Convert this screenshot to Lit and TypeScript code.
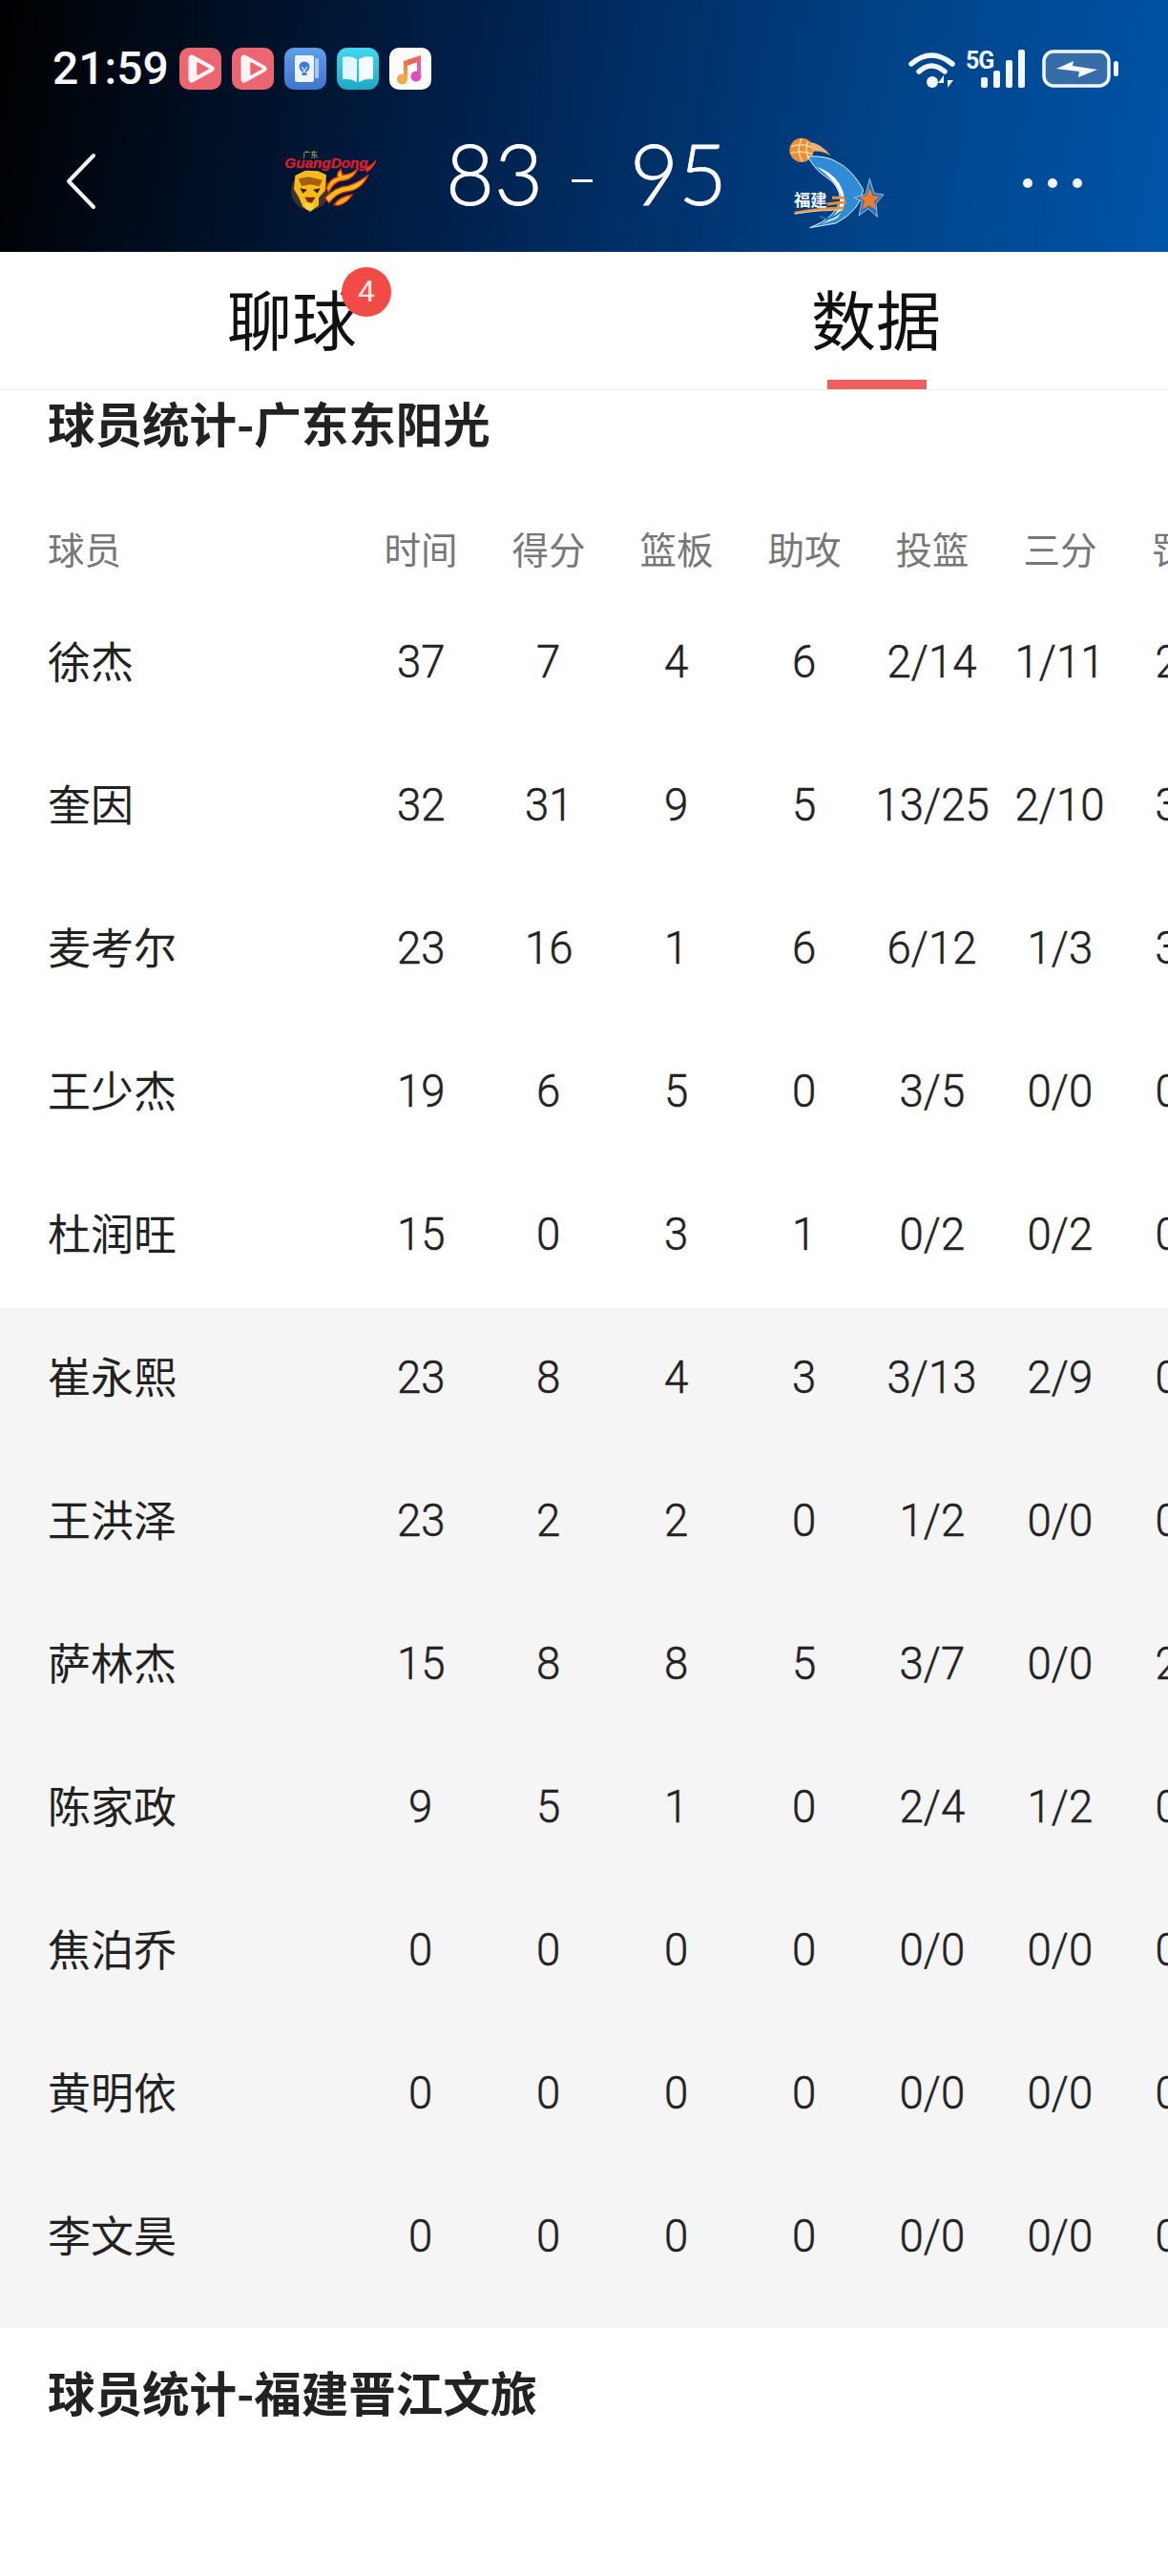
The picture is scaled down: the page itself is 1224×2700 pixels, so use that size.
import { LitElement, html, css, svg } from "lit";
import { customElement } from "lit/decorators.js";

const COLS = ["时间", "得分", "篮板", "助攻", "投篮", "三分", "罚球"];
const STARTERS: string[][] = [
  ["徐杰", "37", "7", "4", "6", "2/14", "1/11", "2/2"],
  ["奎因", "32", "31", "9", "5", "13/25", "2/10", "3/4"],
  ["麦考尔", "23", "16", "1", "6", "6/12", "1/3", "3/4"],
  ["王少杰", "19", "6", "5", "0", "3/5", "0/0", "0/0"],
  ["杜润旺", "15", "0", "3", "1", "0/2", "0/2", "0/0"],
];
const BENCH: string[][] = [
  ["崔永熙", "23", "8", "4", "3", "3/13", "2/9", "0/2"],
  ["王洪泽", "23", "2", "2", "0", "1/2", "0/0", "0/0"],
  ["萨林杰", "15", "8", "8", "5", "3/7", "0/0", "2/2"],
  ["陈家政", "9", "5", "1", "0", "2/4", "1/2", "0/0"],
  ["焦泊乔", "0", "0", "0", "0", "0/0", "0/0", "0/0"],
  ["黄明依", "0", "0", "0", "0", "0/0", "0/0", "0/0"],
  ["李文昊", "0", "0", "0", "0", "0/0", "0/0", "0/0"],
];

const playIcon = (inner: number) => html`<svg class="app" viewBox="0 0 44 44">
  <rect width="44" height="44" rx="10" fill="#ec6671"/>
  <path d="M13 11 L33 22 L13 33 Z" fill="#fbf3f4" stroke="#fbf3f4" stroke-width="7" stroke-linejoin="round"/>
  <path d="M${inner} 16 L${inner + 11} 22 L${inner} 28 Z" fill="#ec6671" stroke="#ec6671" stroke-width="1.5" stroke-linejoin="round"/>
</svg>`;

const bulbIcon = html`<svg class="app" viewBox="0 0 44 44">
  <defs><linearGradient id="bb" x1="0" y1="0" x2="0" y2="1"><stop offset="0" stop-color="#5f9fe9"/><stop offset="1" stop-color="#3d74d0"/></linearGradient></defs>
  <rect width="44" height="44" rx="10" fill="url(#bb)"/>
  <rect x="32" y="11" width="4" height="21" rx="1.5" fill="#a9c8f0"/>
  <rect x="11" y="8" width="20" height="28" rx="2.5" fill="#eef4fc"/>
  <circle cx="21" cy="20" r="5.5" fill="#3f7ad4"/>
  <path d="M18 20 L21 24 L24 20 M21 24 V27" fill="none" stroke="#eef4fc" stroke-width="1.2"/>
  <rect x="18.5" y="26" width="5" height="3" fill="#3f7ad4"/>
</svg>`;

const bookIcon = html`<svg class="app" viewBox="0 0 44 44">
  <defs><linearGradient id="cb" x1="0" y1="0" x2="0" y2="1"><stop offset="0" stop-color="#43d9ef"/><stop offset="1" stop-color="#1ea8c6"/></linearGradient></defs>
  <rect width="44" height="44" rx="11" fill="url(#cb)"/>
  <path d="M6 10 Q15 8 21 12 V36 Q14 32 6 33 Z" fill="#e4f5fb"/>
  <path d="M38 10 Q29 8 23 12 V36 Q30 32 38 33 Z" fill="#f3fbfe"/>
</svg>`;

const musicIcon = html`<svg class="app" viewBox="0 0 44 44">
  <defs><linearGradient id="mb" x1="0" y1="0" x2="1" y2="1"><stop offset="0" stop-color="#f2693f"/><stop offset="1" stop-color="#ee5c7c"/></linearGradient>
  <linearGradient id="mc" x1="0" y1="0" x2="0" y2="1"><stop offset="0" stop-color="#f0703c"/><stop offset="1" stop-color="#f4a045"/></linearGradient></defs>
  <rect width="44" height="44" rx="10" fill="#fdfcfb"/>
  <path d="M15 14 L33 8 V14 L15 20 Z" fill="url(#mb)"/>
  <path d="M15 14 H19 V31 H15 Z" fill="url(#mc)"/>
  <path d="M29 11 H33 V29 H29 Z" fill="#e8609a"/>
  <circle cx="13.5" cy="33" r="5.5" fill="#f4a94a"/>
  <circle cx="28" cy="30" r="5.5" fill="#da4fc0"/>
</svg>`;

const tigerLogo = html`<svg class="logo" viewBox="0 0 510 360">
  <circle cx="165" cy="240" r="60" fill="#3d3230"/>
  <text x="85" y="168" class="gd" textLength="262" lengthAdjust="spacingAndGlyphs">GuangDong</text>
  <text x="142" y="134" class="gz">广东</text>
  <path d="M340 168 Q360 158 374 140 Q368 168 342 182 Z" fill="#e8351e"/>
  <path d="M118 192 L150 176 L190 178 L216 190 L212 240 L192 262 L192 286 L165 306 L142 290 L130 262 L114 235 Z" fill="#f6bb1c"/>
  <path d="M128 202 L160 196 L204 206 L194 226 L165 220 L138 226 Z" fill="#a85c10"/>
  <path d="M133 232 L156 236 L142 248 Z M197 232 L174 236 L188 248 Z" fill="#3a1a08"/>
  <path d="M148 260 L182 260 L170 278 L158 276 Z" fill="#7a2a0c"/>
  <path d="M146 278 L178 280 L172 300 L154 300 Z" fill="#ffd642"/>
  <path d="M216 232 Q226 202 252 196 Q246 186 262 172 L266 190 Q296 190 316 168 Q300 208 262 208 Q238 214 224 244 Z" fill="#f7ad18" stroke="#d6301a" stroke-width="4"/>
  <path d="M212 262 Q246 226 286 224 Q322 212 348 190 Q326 238 282 242 Q250 246 224 278 Z" fill="#f9bf1e" stroke="#d6301a" stroke-width="4"/>
  <path d="M240 284 Q256 258 298 252 Q280 280 254 286 Z" fill="#f7ad18" stroke="#d6301a" stroke-width="4"/>
</svg>`;

const dolphinLogo = html`<svg class="logo" viewBox="0 0 510 360">
  <circle cx="150" cy="112" r="38" fill="#ea9136"/>
  <path d="M118 100 Q150 88 182 104 M116 122 Q150 112 184 124 M150 76 Q132 110 152 148 M170 84 Q160 110 172 140" fill="none" stroke="#fbe0b8" stroke-width="4"/>
  <path d="M176 86 Q214 92 242 130 Q216 112 184 116 Z" fill="#e8b27c"/>
  <path d="M170 132 Q228 128 262 150 Q306 170 344 236 Q336 300 258 342 L176 356 Q256 326 272 270 Q270 222 226 196 Q190 172 170 132 Z" fill="#2f8bd6" stroke="#e4f1fb" stroke-width="3"/>
  <path d="M196 164 Q240 176 268 216 Q304 276 262 326 L212 346 Q280 312 272 252 Q258 206 196 164 Z" fill="#f6fbff"/>
  <path d="M208 320 Q240 340 274 304" fill="none" stroke="#1d6db8" stroke-width="6"/>
  <path d="M246 262 H286 M128 310 Q200 296 284 294 M230 282 Q260 278 290 276" fill="none" stroke="#ee8f34" stroke-width="9"/>
  <path d="M128 312 Q200 300 270 300" fill="none" stroke="#e7d9c6" stroke-width="3"/>
  <path d="M364 202 L378 248 L408 252 L384 280 L388 322 L360 296 L330 318 L340 272 L316 262 L352 250 Z" fill="#2f70b8" stroke="#9cc4ea" stroke-width="3"/>
  <path d="M364 232 L374 256 L396 258 L378 274 L384 300 L362 286 L340 298 L348 272 L332 258 L354 256 Z" fill="#ee7c2c"/>
  <text x="126" y="288" class="fj">福建</text>
</svg>`;

const wifi = html`<svg class="s-wifi" viewBox="0 0 50 40">
  <path d="M3 15 Q24 -3 46 15" fill="none" stroke="#f1f6fb" stroke-width="5.5" stroke-linecap="round"/>
  <path d="M11 23 Q24 11 38 23" fill="none" stroke="#f1f6fb" stroke-width="5.5" stroke-linecap="round"/>
  <circle cx="25" cy="34" r="6" fill="#f1f6fb"/>
  <path d="M37 40 V27 L31 35 H37 Z M41 27 V40 L47 32 H41 Z" fill="#f1f6fb"/>
</svg>`;

const signal = html`<svg class="s-sig" viewBox="0 0 47 40">
  <rect x="0" y="29" width="7" height="11" rx="2" fill="#f1f6fb"/>
  <rect x="13" y="22" width="7" height="18" rx="2" fill="#f1f6fb"/>
  <rect x="26" y="11" width="7" height="29" rx="2" fill="#f1f6fb"/>
  <rect x="39" y="0" width="7" height="40" rx="2" fill="#f1f6fb"/>
</svg>`;

const battery = html`<svg class="s-bat" viewBox="0 0 80 40">
  <rect x="2" y="2" width="68" height="36" rx="10" fill="#366ca8" stroke="#f1f6fb" stroke-width="3.5"/>
  <rect x="75" y="12" width="5" height="16" rx="2.5" fill="#f1f6fb"/>
  <path d="M15 20 L33 12 L32 17 L58 21 L38 29 L39 23 Z" fill="#f6f9fc"/>
</svg>`;

const back = svg`<path d="M30 3 L4 30 L30 57" fill="none" stroke="#f4f6f8" stroke-width="4" stroke-linecap="round" stroke-linejoin="round"/>`;

@customElement("app-root")
export class AppRoot extends LitElement {
  static styles = css`
    :host {
      display: block;
      width: 1224px;
      height: 2700px;
      overflow: hidden;
      background: #fff;
      font-family: "Noto Sans CJK SC", "Noto Sans", sans-serif;
      color: #222;
    }
    .top {
      height: 264px;
      background: linear-gradient(100deg, #000 0%, #001a3e 33%, #002c62 52%, #00448a 76%, #0054a8 100%);
      color: #fff;
      display: flex;
      flex-direction: column;
    }
    .status {
      height: 50px;
      padding: 50px 52px 0 55px;
      display: flex;
      align-items: flex-start;
    }
    .time {
      width: 133px;
      font: 500 48px/44px Roboto, sans-serif;
      color: #f6f8fa;
    }
    .apps { display: flex; gap: 11px; }
    .app { width: 44px; height: 44px; display: block; }
    .sys {
      margin-left: auto;
      display: flex;
      align-items: flex-start;
      position: relative;
      padding-top: 2px;
    }
    .s-wifi { width: 50px; height: 40px; }
    .s-sig { width: 47px; height: 40px; margin-left: 26px; }
    .s-bat { width: 80px; height: 40px; margin-left: 17px; }
    .fiveg {
      position: absolute;
      left: 60px;
      top: 2px;
      font: 700 25px/24px Roboto, sans-serif;
      color: #f1f6fb;
      letter-spacing: -1px;
    }
    .nav {
      flex: 1;
      display: flex;
      align-items: flex-start;
      padding-left: 68px;
    }
    .back { width: 34px; height: 60px; margin-top: 60px; display: block; }
    .logo { width: 170px; height: 120px; display: block; margin-top: 20px; }
    .gd { font: italic 900 46px "Liberation Sans", sans-serif; fill: #cf1f30; stroke: #cf1f30; stroke-width: 1.5px; }
    .gz { font: 24px "Noto Sans CJK SC", sans-serif; fill: #b8d84a; }
    .fj { font: 700 52px "Noto Sans CJK SC", sans-serif; fill: #f4f8fc; }
    .logo-l { margin-left: 168px; }
    .score {
      width: 350px;
      margin-top: 31px;
      font: 300 88px/100px Lato, sans-serif;
      -webkit-text-stroke: 0.8px #fff;
      color: #fff;
      display: flex;
      align-items: center;
      height: 100px;
    }
    .score .a { margin-left: 27px; width: 132px; }
    .score .d { width: 22px; height: 3px; background: #fff; margin-top: 16px; }
    .score .b { margin-left: 39px; }
    .dots { display: flex; gap: 16px; margin: 87px 0 0 112px; }
    .dots i { width: 10px; height: 10px; border-radius: 50%; background: #f2f6fb; display: block; }

    .tabs {
      height: 144px;
      display: grid;
      grid-template-columns: 1fr 1fr;
      border-bottom: 1px solid #ededed;
      box-sizing: content-box;
    }
    .tab {
      position: relative;
      display: flex;
      justify-content: center;
      align-items: flex-start;
      padding-top: 30px;
      font-size: 68px;
      line-height: 78px;
      color: #111;
    }
    .tab .inner { position: relative; }
    .badge {
      position: absolute;
      left: 120px;
      top: -14px;
      width: 52px;
      height: 52px;
      border-radius: 50%;
      background: #f24a45;
      color: #fbe9e8;
      font: 400 32px/50px Roboto, sans-serif;
      text-align: center;
    }
    .bar {
      position: absolute;
      left: 255px;
      bottom: 0;
      width: 104px;
      height: 10px;
      background: #ef5f5f;
    }
    .title {
      font-size: 49.5px;
      line-height: 76px;
      font-weight: 700;
      color: #222;
      padding-left: 50px;
      margin: -4px 0 4px;
    }
    .title.second { padding-top: 29px; margin: 0; }
    .row {
      display: flex;
      width: 1224px;
      overflow: hidden;
      height: 150px;
      padding-bottom: 6px;
      box-sizing: border-box;
      align-items: center;
    }
    .row.head {
      height: 136px;
      padding: 42px 0 0;
      color: #777;
      font-size: 38.5px;
    }
    .name { width: 324px; margin: 0 0 3px 50px; font-size: 45px; flex: none; color: #222; }
    .head .name { font-size: 38.5px; color: #777; margin-bottom: 0; }
    .c { width: 134px; flex: none; text-align: center; }
    .n {
      display: inline-block;
      font: 300 49px/60px Roboto, sans-serif;
      -webkit-text-stroke: 0.5px #222;
      color: #222;
      transform: translateY(1px) scaleX(0.93);
      white-space: nowrap;
    }
    .bench { background: #f5f5f5; padding-bottom: 19px; }
  `;

  private row(r: string[]) {
    return html`<div class="row">
      <div class="name">${r[0]}</div>
      ${r.slice(1).map((v) => html`<div class="c"><span class="n">${v}</span></div>`)}
    </div>`;
  }

  render() {
    return html`
      <div class="top">
        <div class="status">
          <div class="time">21:59</div>
          <div class="apps">${playIcon(19)}${playIcon(20)}${bulbIcon}${bookIcon}${musicIcon}</div>
          <div class="sys">${wifi}<span class="fiveg">5G</span>${signal}${battery}</div>
        </div>
        <div class="nav">
          <svg class="back" viewBox="0 0 34 60">${back}</svg>
          <div class="logo-l">${tigerLogo}</div>
          <div class="score"><span class="a">83</span><span class="d"></span><span class="b">95</span></div>
          <div>${dolphinLogo}</div>
          <div class="dots"><i></i><i></i><i></i></div>
        </div>
      </div>
      <div class="tabs">
        <div class="tab"><div class="inner">聊球<span class="badge">4</span></div></div>
        <div class="tab"><div class="inner">数据</div><span class="bar"></span></div>
      </div>
      <div class="title">球员统计-广东东阳光</div>
      <div class="row head">
        <div class="name">球员</div>
        ${COLS.map((c) => html`<div class="c">${c}</div>`)}
      </div>
      ${STARTERS.map((r) => this.row(r))}
      <div class="bench">${BENCH.map((r) => this.row(r))}</div>
      <div class="title second">球员统计-福建晋江文旅</div>
    `;
  }
}
